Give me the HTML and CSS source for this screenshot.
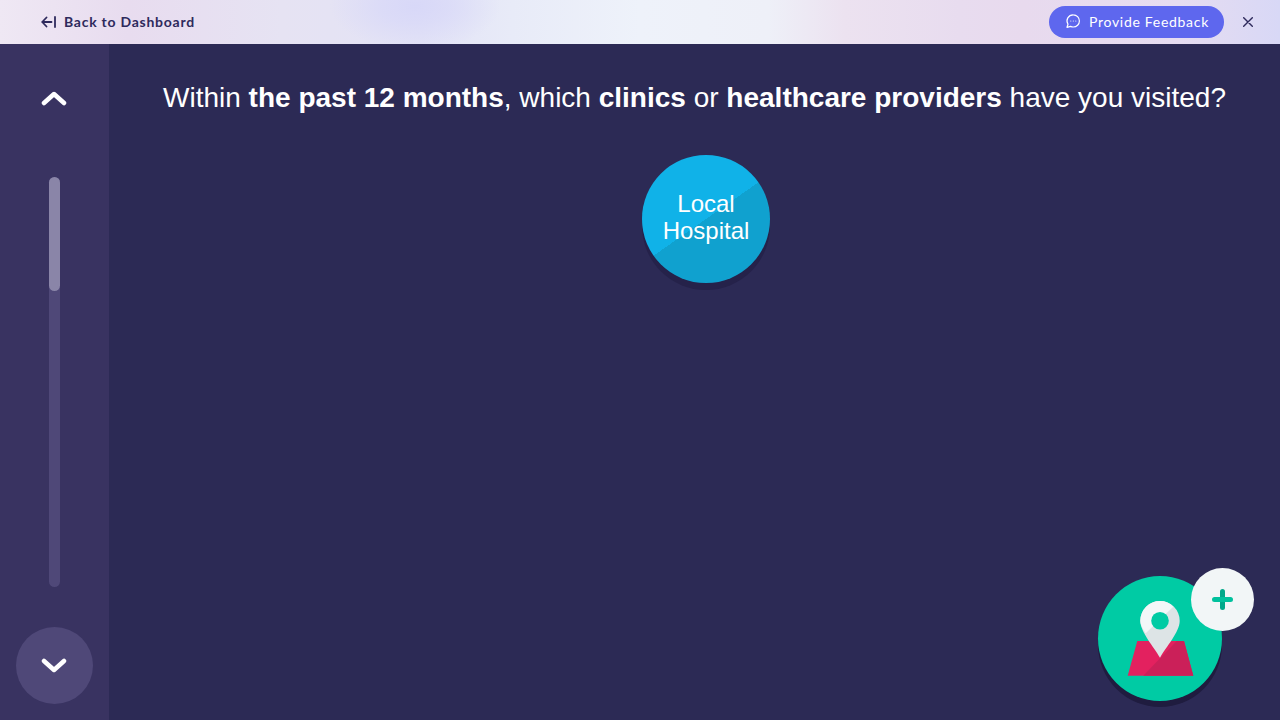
FILE: index.html
```html
<!DOCTYPE html>
<html lang="en">
<head>
  <meta charset="UTF-8">
  <meta name="viewport" content="width=device-width, initial-scale=1.0">
  <title>Healthcare providers survey</title>
  <link rel="stylesheet" href="styles.css">
</head>
<body>
  <header class="topbar">
    <a class="back-link" href="#">
      <svg class="back-icon" width="15" height="12" viewBox="0 0 15 12" fill="none" stroke="#2e2a5c" stroke-width="1.800" stroke-linecap="round" stroke-linejoin="round">
        <path d="M5.500 1.500 1.200 6l4.300 4.500M1.200 6H10.500M14 1v10"/>
      </svg>
      Back to Dashboard
    </a>
    <div class="topbar-right">
      <button class="feedback-btn">
        <svg width="16" height="16" viewBox="0 0 16 16" fill="none" stroke="#fff" stroke-width="1.200" stroke-linejoin="round">
          <path d="M8.300 1.800a6.100 6.100 0 0 1 0 12.200c-1 0-1.900-.2-2.700-.6l-3.600.9 1-3.100a6.100 6.100 0 0 1 5.300-9.400z"/>
          <path d="M5.800 8h.01M8.300 8h.01M10.800 8h.01" stroke-linecap="round" stroke-width="1.100"/>
        </svg>
        Provide Feedback
      </button>
      <button class="close-btn" aria-label="Close">
        <svg width="10" height="10" viewBox="0 0 10 10" fill="none" stroke="#2e2a5c" stroke-width="1.400" stroke-linecap="round">
          <path d="M.7.700l8.600 8.600M9.300.700.7 9.300"/>
        </svg>
      </button>
    </div>
  </header>

  <div class="layout">
    <aside class="sidebar">
      <button class="nav-btn">
        <svg class="chevron-up" width="26" height="16" viewBox="0 0 26 16" fill="none" stroke="#fff" stroke-width="4.500" stroke-linecap="round" stroke-linejoin="round">
          <path d="M3 13 13 4l10 9"/>
        </svg>
      </button>
      <div class="track">
        <div class="thumb"></div>
      </div>
      <button class="nav-btn nav-btn-active">
        <svg width="26" height="16" viewBox="0 0 26 16" fill="none" stroke="#fff" stroke-width="4.500" stroke-linecap="round" stroke-linejoin="round">
          <path d="M3 3l10 9 10-9"/>
        </svg>
      </button>
    </aside>

    <main class="main">
      <h1 class="question">Within <b>the past 12 months</b>, which <b>clinics</b> or <b>healthcare providers</b> have you visited?</h1>
      <div class="bubbles">
        <button class="bubble">Local<br>Hospital</button>
      </div>
    </main>
  </div>

  <div class="add-place">
    <svg class="place-icon" width="124" height="124" viewBox="0 0 124 124">
      <path d="M39.300 65H86l9.300 34.700H29.700z" fill="#e3215f"/>
      <path d="M78.700 65H86l9.300 34.700H45.300z" fill="#cb2059"/>
      <path d="M62 25a19.700 19.700 0 0 1 19.700 19.700C81.700 56 68 71 62 81.700 56 71 42.300 56 42.300 44.700A19.700 19.700 0 0 1 62 25z" fill="#dde4e6"/>
      <path d="M62 25c5.500 0 10 2 13.300 5.700L47.700 57.300c-3-4.500-5.400-8.800-5.400-12.600A19.700 19.700 0 0 1 62 25z" fill="#f3f7f8"/>
      <circle cx="62" cy="44.700" r="8.800" fill="#00cba4"/>
    </svg>
    <button class="plus-btn">
      <svg width="21" height="21" viewBox="0 0 21 21" stroke-width="5" stroke-linecap="round">
        <path d="M10.500 2.500v16" stroke="#00a88a"/>
        <path d="M2.500 10.500h16" stroke="#00c19d"/>
      </svg>
    </button>
  </div>
</body>
</html>
```

FILE: styles.css
```css
* {
  margin: 0;
  padding: 0;
  box-sizing: border-box;
}

html, body {
  height: 100%;
}

body {
  display: flex;
  flex-direction: column;
  overflow: hidden;
  background: #2c2a55;
  font-family: "Liberation Sans", Arial, sans-serif;
}

button {
  border: 0;
  background: none;
  font: inherit;
  cursor: pointer;
}

/* top bar */
.topbar {
  flex: 0 0 44px;
  display: flex;
  align-items: center;
  justify-content: space-between;
  padding: 0 27px 2px 41px;
  background:
    radial-gradient(ellipse 85px 44px at 415px 6px, #d8d8f8 0%, rgba(216, 216, 248, .7) 40%, rgba(216, 216, 248, 0) 100%),
    linear-gradient(90deg, #efe8f4 0%, #e8dcef 10%, #e6e3f3 22%, #e3e3f6 33%, #e8ebf8 40%, #eef2fa 50%, #eef0f8 60%, #ece2f0 66%, #e8dcef 75%, #e8daee 80%, #e6dcf1 92%, #d8d8f6 100%);
  font-family: Lato, "Open Sans", sans-serif;
  font-size: 14px;
  letter-spacing: .75px;
}

.back-link {
  display: flex;
  align-items: center;
  gap: 8px;
  color: #2e2a5c;
  font-weight: 700;
  text-decoration: none;
}

.back-icon {
  margin-top: 2px;
}

.topbar-right {
  display: flex;
  align-items: center;
  gap: 19px;
  margin-top: 2px;
}

.feedback-btn {
  display: flex;
  align-items: center;
  gap: 8px;
  width: 175px;
  height: 32px;
  padding: 0 0 2px 16px;
  border-radius: 16px;
  background: #5e67ee;
  color: #fff;
  letter-spacing: .7px;
}

.close-btn {
  display: flex;
  width: 10px;
  height: 10px;
}

/* sidebar */
.layout {
  flex: 1;
  display: flex;
  min-height: 0;
}

.sidebar {
  flex: 0 0 109px;
  display: flex;
  flex-direction: column;
  align-items: center;
  gap: 40px;
  padding: 16px 0;
  background: #393361;
}

.nav-btn {
  flex: 0 0 77px;
  width: 77px;
  display: flex;
  align-items: center;
  justify-content: center;
  padding-right: 2px;
  border-radius: 50%;
}

.chevron-up {
  margin-bottom: 2px;
}

.nav-btn-active {
  background: #4f4878;
}

.track {
  flex: 1;
  width: 11px;
  margin-right: 1px;
  border-radius: 6px;
  background: #4f4878;
}

.thumb {
  height: 114px;
  border-radius: 6px;
  background: #8a85a8;
}

/* question */
.main {
  flex: 1;
  padding-top: 36px;
  text-align: center;
}

.question {
  color: #fff;
  font-size: 28px;
  font-weight: 400;
  line-height: 36px;
}

.bubbles {
  display: flex;
  justify-content: center;
  padding: 39px 0 0 23px;
}

.bubble {
  width: 128px;
  height: 128px;
  padding-bottom: 4px;
  border-radius: 50%;
  background: linear-gradient(145deg, #10b2e8 50%, #10a1cf 50%);
  box-shadow: 0 7px 0 #25224a;
  color: #fff;
  font-size: 24px;
  line-height: 27px;
}

/* add place button, floats over the page */
.add-place {
  position: absolute;
  left: 1098px;
  top: 576px;
  width: 124px;
  height: 125px;
  border-radius: 50%;
  background: #00cba4;
  box-shadow: 0 6px 0 #1f1c3f;
}

.place-icon {
  display: block;
}

.plus-btn {
  position: absolute;
  left: 93px;
  top: -8px;
  width: 63px;
  height: 63px;
  display: flex;
  align-items: center;
  justify-content: center;
  border-radius: 50%;
  background: #f2f6f7;
}
```
